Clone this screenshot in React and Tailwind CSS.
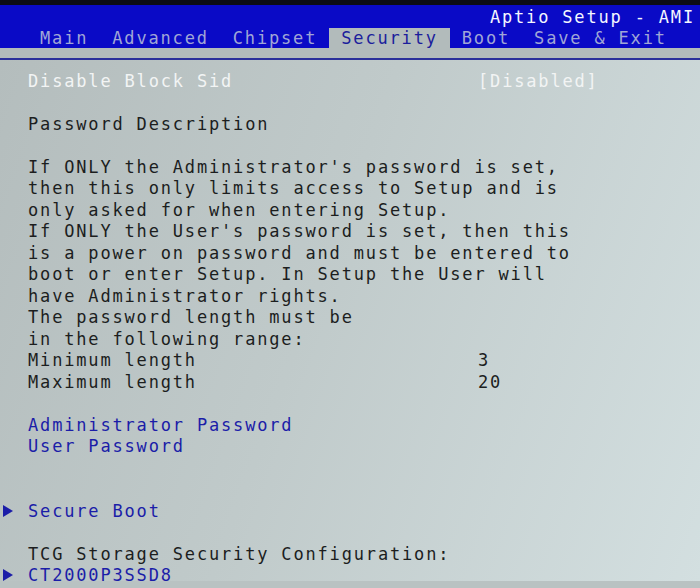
import React from 'react';

const tabs = ['Main', 'Advanced', 'Chipset', 'Security', 'Boot', 'Save & Exit'];

// each row is one text line of the BIOS screen
const rows = [
  { text: 'Disable Block Sid', value: '[Disabled]', tone: 'white' },
  {},
  { text: 'Password Description' },
  {},
  { text: "If ONLY the Administrator's password is set," },
  { text: 'then this only limits access to Setup and is' },
  { text: 'only asked for when entering Setup.' },
  { text: "If ONLY the User's password is set, then this" },
  { text: 'is a power on password and must be entered to' },
  { text: 'boot or enter Setup. In Setup the User will' },
  { text: 'have Administrator rights.' },
  { text: 'The password length must be' },
  { text: 'in the following range:' },
  { text: 'Minimum length', value: '3' },
  { text: 'Maximum length', value: '20' },
  {},
  { text: 'Administrator Password', tone: 'blue' },
  { text: 'User Password', tone: 'blue' },
  {},
  {},
  { text: 'Secure Boot', tone: 'blue', arrow: true },
  {},
  { text: 'TCG Storage Security Configuration:' },
  { text: 'CT2000P3SSD8', tone: 'blue', arrow: true },
];

const toneClass = {
  white: 'text-[#f2f4f4]',
  blue: 'text-[#1b1da8]',
  dark: 'text-[#1c1e1e]',
};

function Arrow() {
  return (
    <svg width="10" height="12" viewBox="0 0 10 12" className="ml-[3px]">
      <path d="M0 0 L10 6 L0 12 Z" fill="#1b1da8" />
    </svg>
  );
}

function App() {
  return (
    <div
      className="w-[700px] h-[588px] overflow-hidden bg-[#b9c2c2] text-[17px] tracking-[1.83px] leading-5 whitespace-pre"
      style={{ fontFamily: '"DejaVu Sans Mono", "Liberation Mono", monospace' }}
    >
      {/* top bar */}
      <div className="h-[5px] bg-[#0c0c14]" />
      <div className="bg-[#0a0ac6]">
        <div className="h-[23px] flex items-center justify-end pr-[5px] text-[#f4f6ff]">
          Aptio Setup - AMI
        </div>
        <div className="flex pl-[28px] h-5">
          {tabs.map((t) => (
            <div
              key={t}
              className={`px-3 h-5 leading-5 ${
                t === 'Security' ? 'bg-[#b2bbbb] text-[#1c1e9c]' : 'text-[#a0a6d6]'
              }`}
            >
              {t}
            </div>
          ))}
        </div>
      </div>
      <div className="h-[10px] bg-[#b2bbbb]" />
      <div className="h-[2px] bg-[#2a2f9a]" />

      {/* content */}
      <div className="h-[521px] pt-[10px] bg-[linear-gradient(110deg,#b4bdbd_0%,#c0caca_45%,#d3dfe0_100%)]">
        {rows.map((r, i) => (
          <div key={i} className="h-[21.5px] flex items-center">
            <div className="w-[28px] flex items-center">{r.arrow ? <Arrow /> : null}</div>
            <div className={`w-[450px] ${toneClass[r.tone || 'dark']}`}>{r.text || ''}</div>
            <div className={toneClass[r.tone || 'dark']}>{r.value || ''}</div>
          </div>
        ))}
      </div>
    </div>
  );
}

export default App;
